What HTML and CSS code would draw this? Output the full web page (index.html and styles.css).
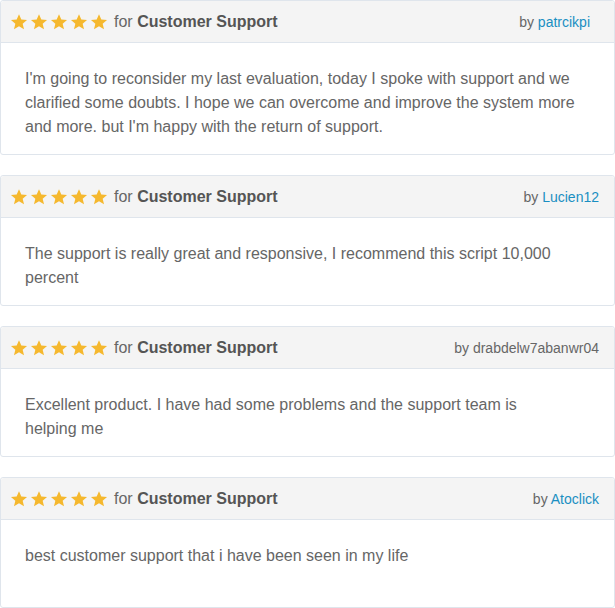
FILE: index.html
```html
<!DOCTYPE html>
<html>
<head>
<meta charset="utf-8">
<link rel="stylesheet" href="styles.css">
</head>
<body>
<svg width="0" height="0" class="defs" aria-hidden="true">
  <defs>
    <symbol id="star" viewBox="0 0 24 24">
      <path d="M12 1.5l3.1 7.1 7.6.6-5.8 5 1.8 7.5L12 17.7l-6.7 4 1.8-7.5-5.8-5 7.6-.6z"/>
    </symbol>
  </defs>
</svg>
<div class="reviews">
  <div class="card">
    <div class="card-head">
      <div class="rating">
        <span class="stars"><svg class="star"><use href="#star"/></svg><svg class="star"><use href="#star"/></svg><svg class="star"><use href="#star"/></svg><svg class="star"><use href="#star"/></svg><svg class="star"><use href="#star"/></svg></span>
        <span class="for">for <b>Customer Support</b></span>
      </div>
      <div class="by by-first">by <a href="#">patrcikpi</a></div>
    </div>
    <div class="card-body">I'm going to reconsider my last evaluation, today I spoke with support and we clarified some doubts. I hope we can overcome and improve the system more and more. but I'm happy with the return of support.</div>
  </div>
  <div class="card">
    <div class="card-head">
      <div class="rating">
        <span class="stars"><svg class="star"><use href="#star"/></svg><svg class="star"><use href="#star"/></svg><svg class="star"><use href="#star"/></svg><svg class="star"><use href="#star"/></svg><svg class="star"><use href="#star"/></svg></span>
        <span class="for">for <b>Customer Support</b></span>
      </div>
      <div class="by">by <a href="#">Lucien12</a></div>
    </div>
    <div class="card-body">The support is really great and responsive, I recommend this script 10,000 percent</div>
  </div>
  <div class="card">
    <div class="card-head">
      <div class="rating">
        <span class="stars"><svg class="star"><use href="#star"/></svg><svg class="star"><use href="#star"/></svg><svg class="star"><use href="#star"/></svg><svg class="star"><use href="#star"/></svg><svg class="star"><use href="#star"/></svg></span>
        <span class="for">for <b>Customer Support</b></span>
      </div>
      <div class="by">by drabdelw7abanwr04</div>
    </div>
    <div class="card-body">Excellent product. I have had some problems and the support team is<br>helping me</div>
  </div>
  <div class="card">
    <div class="card-head">
      <div class="rating">
        <span class="stars"><svg class="star"><use href="#star"/></svg><svg class="star"><use href="#star"/></svg><svg class="star"><use href="#star"/></svg><svg class="star"><use href="#star"/></svg><svg class="star"><use href="#star"/></svg></span>
        <span class="for">for <b>Customer Support</b></span>
      </div>
      <div class="by">by <a href="#">Atoclick</a></div>
    </div>
    <div class="card-body">best customer support that i have been seen in my life</div>
  </div>
</div>
</body>
</html>
```
FILE: styles.css
```css
html, body {
  margin: 0;
  padding: 0;
  background: #fff;
}
body {
  font-family: "Liberation Sans", Arial, sans-serif;
  color: #666;
}
.defs {
  position: absolute;
  width: 0;
  height: 0;
}
.reviews {
  display: flex;
  flex-direction: column;
  gap: 20px;
  width: 615px;
}
.card {
  border: 1px solid #dfe5ec;
  border-radius: 3px;
  background: #fff;
}
.card-head {
  display: flex;
  justify-content: space-between;
  align-items: center;
  height: 41px;
  padding: 0 15px 0 9px;
  background: #f4f4f4;
  border-bottom: 1px solid #dfe5ec;
  border-radius: 3px 3px 0 0;
}
.rating {
  display: flex;
  align-items: center;
}
.stars {
  display: flex;
  gap: 2px;
}
.star {
  width: 18px;
  height: 18px;
  fill: #f5b82e;
}
.for {
  margin-left: 6px;
  font-size: 16px;
  color: #666;
}
.for b {
  color: #555;
}
.by {
  font-size: 14px;
  color: #666;
}
.by-first {
  margin-right: 9px;
}
.by a {
  color: #1a8fc2;
  text-decoration: none;
}
.card-body {
  box-sizing: border-box;
  min-height: 87px;
  padding: 24px 36px 15px 24px;
  font-size: 16px;
  line-height: 24px;
  color: #666;
}
```
